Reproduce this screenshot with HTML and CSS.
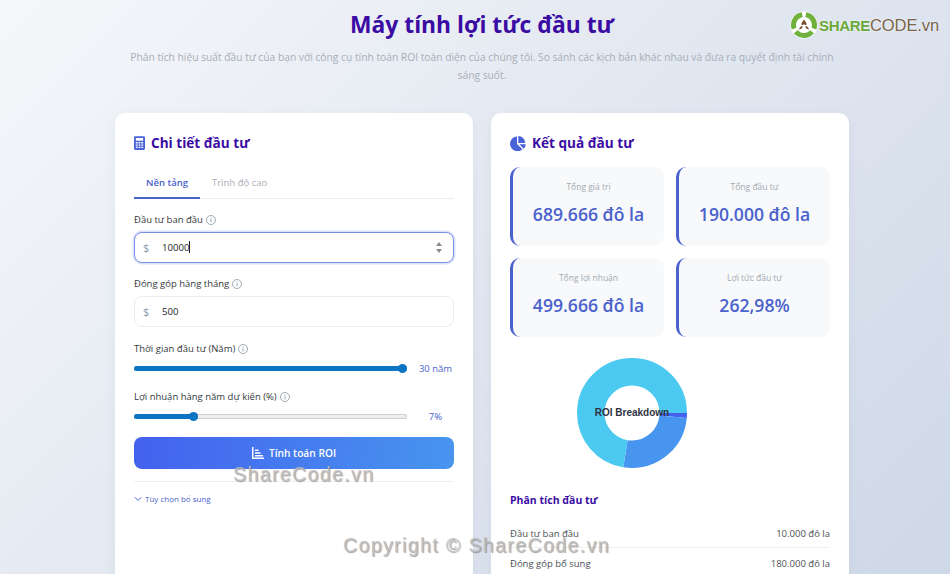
FILE: index.html
```html
<!DOCTYPE html>
<html lang="vi">
<head>
<meta charset="utf-8">
<title>Máy tính lợi tức đầu tư</title>
<link rel="stylesheet" href="styles.css">
</head>
<body>
<div class="logo">
  <svg class="logo-icon" viewBox="0 0 28 28" width="28" height="28">
    <circle cx="14" cy="14" r="13.5" fill="#fff"/>
    <g fill="none" stroke="#70b13c" stroke-width="5">
      <circle cx="14" cy="14" r="10.500" pathLength="100" stroke-dasharray="28 72" transform="rotate(-80 14 14)"/>
      <circle cx="14" cy="14" r="10.500" pathLength="100" stroke-dasharray="28 72" transform="rotate(40 14 14)"/>
      <circle cx="14" cy="14" r="10.500" pathLength="100" stroke-dasharray="28 72" transform="rotate(160 14 14)"/>
    </g>
    <path d="M14 8.500c1.200 2 2.600 3.200 2.800 5-.8.700-2 .6-2.800-.2-.8.800-2 .9-2.800.2.200-1.800 1.600-3 2.800-5zM9 18.500c.3-2 1.800-3.300 3.500-3.500.5 1.500-.8 3.200-3.500 3.500zM19 18.500c-.3-2-1.800-3.300-3.500-3.500-.5 1.500.8 3.200 3.500 3.500z" fill="#7a5230"/>
  </svg>
  <span class="logo-text"><b>SHARE</b>CODE.vn</span>
</div>

<main class="page">
  <header class="head">
    <h1>Máy tính lợi tức đầu tư</h1>
    <p>Phân tích hiệu suất đầu tư của bạn với công cụ tính toán ROI toàn diện của chúng tôi. So sánh các kịch bản khác nhau và đưa ra quyết định tài chính sáng suốt.</p>
  </header>

  <div class="columns">
    <section class="card">
      <h2 class="card-title">
        <svg class="title-icon" viewBox="0 0 12 15" width="11" height="14"><path fill-rule="evenodd" d="M1.500 0h9A1.500 1.500 0 0 1 12 1.500v12a1.500 1.500 0 0 1-1.500 1.500h-9A1.500 1.500 0 0 1 0 13.500v-12A1.500 1.500 0 0 1 1.500 0zM2 2v3h8V2zm0 4.500V8h2V6.500zm3 0V8h2V6.500zm3 0V8h2V6.500zM2 9v1.500h2V9zm3 0v1.500h2V9zm3 0v1.500h2V9zM2 11.500V13h2v-1.500zm3 0V13h2v-1.500zm3 0V13h2v-1.500z" fill="#4a62d8"/></svg>
        Chi tiết đầu tư
      </h2>
      <nav class="tabs">
        <span class="tab active">Nền tảng</span>
        <span class="tab">Trình độ cao</span>
      </nav>

      <label class="field-label">Đầu tư ban đầu <svg class="info" viewBox="0 0 10 10" width="10" height="10"><circle cx="5" cy="5" r="4.500" fill="none" stroke="#8a93a0" stroke-width=".8"/><path d="M5 4.300v3M5 2.500v1" stroke="#8a93a0" stroke-width=".9"/></svg></label>
      <div class="input focused">
        <span class="dollar">$</span><span class="value">10000<i class="caret"></i></span>
        <svg class="spin" viewBox="0 0 6 11" width="6" height="11"><path d="M3 0l3 4H0zM3 11L0 7h6z" fill="#858b93"/></svg>
      </div>

      <label class="field-label">Đóng góp hàng tháng <svg class="info" viewBox="0 0 10 10" width="10" height="10"><circle cx="5" cy="5" r="4.500" fill="none" stroke="#8a93a0" stroke-width=".8"/><path d="M5 4.300v3M5 2.500v1" stroke="#8a93a0" stroke-width=".9"/></svg></label>
      <div class="input">
        <span class="dollar">$</span><span class="value">500</span>
      </div>

      <label class="field-label slider-label">Thời gian đầu tư (Năm) <svg class="info" viewBox="0 0 10 10" width="10" height="10"><circle cx="5" cy="5" r="4.500" fill="none" stroke="#8a93a0" stroke-width=".8"/><path d="M5 4.300v3M5 2.500v1" stroke="#8a93a0" stroke-width=".9"/></svg></label>
      <div class="slider-row">
        <div class="track"><div class="fill" style="width:100%"><i class="thumb"></i></div></div>
        <span class="slider-value">30 năm</span>
      </div>

      <label class="field-label slider-label">Lợi nhuận hàng năm dự kiến (%) <svg class="info" viewBox="0 0 10 10" width="10" height="10"><circle cx="5" cy="5" r="4.500" fill="none" stroke="#8a93a0" stroke-width=".8"/><path d="M5 4.300v3M5 2.500v1" stroke="#8a93a0" stroke-width=".9"/></svg></label>
      <div class="slider-row">
        <div class="track"><div class="fill" style="width:23.6%"><i class="thumb"></i></div></div>
        <span class="slider-value">7%</span>
      </div>

      <button class="primary">
        <svg viewBox="0 0 12 12" width="12" height="12"><path d="M0 0h1.500v10.500H12V12H0zM3 2.500h3.500v1.500H3zM3 5.300h5.500v1.500H3zM3 8.100h8v1.500H3z" fill="#fff"/></svg>
        Tính toán ROI
      </button>
      <div class="more">
        <svg viewBox="0 0 8 6" width="8" height="6"><path d="M.8 1.200L4 4.400l3.200-3.200" fill="none" stroke="#4a62cc" stroke-width="1"/></svg>
        Tùy chọn bổ sung
      </div>
    </section>

    <section class="card">
      <h2 class="card-title results-title">
        <svg class="title-icon" viewBox="0 0 16 15" width="16" height="15"><path d="M7 0.500v7.500l5.500 5.300A7.400 7.400 0 1 1 7 .5zM8.300 0a7.200 7.200 0 0 1 6.900 6.900H8.300zM9.300 8.200h6.500a7.300 7.300 0 0 1-2.100 4.500z" fill="#4a62d8"/></svg>
        Kết quả đầu tư
      </h2>
      <div class="stats">
        <div class="stat"><div class="stat-label">Tổng giá trị</div><div class="stat-value">689.666 đô la</div></div>
        <div class="stat"><div class="stat-label">Tổng đầu tư</div><div class="stat-value">190.000 đô la</div></div>
        <div class="stat"><div class="stat-label">Tổng lợi nhuận</div><div class="stat-value">499.666 đô la</div></div>
        <div class="stat"><div class="stat-label">Lợi tức đầu tư</div><div class="stat-value">262,98%</div></div>
      </div>
      <div class="chart">
        <svg viewBox="0 0 110 110" width="110" height="110">
          <circle class="arc" cx="55" cy="55" r="41.250" pathLength="100" stroke="#4361ee" stroke-dasharray="1.45 98.55"/>
          <circle class="arc" cx="55" cy="55" r="41.250" pathLength="100" stroke="#4895ef" stroke-dasharray="26.1 73.9" stroke-dashoffset="-1.45"/>
          <circle class="arc" cx="55" cy="55" r="41.250" pathLength="100" stroke="#4cc9f0" stroke-dasharray="72.45 27.55" stroke-dashoffset="-27.55"/>
          <text class="chart-title" x="55" y="58" text-anchor="middle">ROI Breakdown</text>
        </svg>
      </div>
      <h3 class="sub-title">Phân tích đầu tư</h3>
      <div class="row"><span>Đầu tư ban đầu</span><span>10.000 đô la</span></div>
      <div class="row"><span>Đóng góp bổ sung</span><span>180.000 đô la</span></div>
    </section>
  </div>
</main>

<div class="mark mark-a">ShareCode.vn</div>
<div class="mark mark-b">Copyright © ShareCode.vn</div>
</body>
</html>
```

FILE: styles.css
```css
* { box-sizing: border-box; }
html, body { margin: 0; height: 574px; overflow: hidden; }
body {
  background: linear-gradient(135deg, #f5f7fa 0%, #c3cfe2 100%) no-repeat;
  background-size: 100% 1000px;
  font-family: "Open Sans", "Noto Sans", sans-serif;
  color: #343a40;
  position: relative;
}
.page { margin-left: 115px; width: 734px; }
.head { text-align: center; padding-top: 8px; }
.head h1 { margin: 0; font-size: 22.800px; line-height: 33px; font-weight: 700; color: #3a0ca3; }
.head p { margin: 8px auto 0; width: 706px; font-size: 10.250px; line-height: 17.500px; color: #a8aeb8; }
.columns { display: grid; grid-template-columns: 358px 358px; gap: 18px; margin-top: 29px; }
.card { background: #fff; border-radius: 10px 10px 0 0; padding: 20px 19px; height: 461px; overflow: hidden; box-shadow: 0 4px 12px rgba(120,135,170,.1); }
.card-title { margin: 0; display: flex; align-items: center; gap: 6px; font-size: 13.600px; line-height: 20px; font-weight: 700; color: #3a0ca3; }
.tabs { display: flex; margin-top: 13px; border-bottom: 1px solid #eceef2; height: 33px; }
.tab { padding: 0 12px; font-size: 9.500px; line-height: 34px; font-weight: 500; color: #a8aeb8; }
.tab.active { color: #4a62cc; font-weight: 600; border-bottom: 2px solid #4a62cc; height: 33px; }
.field-label { display: flex; align-items: center; gap: 3px; font-size: 9.500px; line-height: 14px; font-weight: 500; color: #343a40; }
.tabs + .field-label { margin-top: 14px; }
.slider-label { margin-bottom: -1px; }
.input + .slider-label { margin-top: 15px; }
.input { display: flex; align-items: center; height: 31px; margin-top: 5px; margin-bottom: 14px; padding: 0 11px 0 8px; background: #fff; border: 1px solid #e9ecef; border-radius: 8px; font-size: 9.600px; color: #212529; }
.input.focused { border-color: #7b8fe0; box-shadow: 0 0 0 1.500px rgba(67,97,238,.18); }
.dollar { width: 19px; font-size: 11px; color: #8f98a3; }
.value { flex: 1; }
.caret { display: inline-block; width: 1px; height: 12px; background: #222; vertical-align: -2px; }
.slider-row { display: flex; align-items: center; height: 26px; margin-bottom: 9px; }
.track { width: 273px; height: 5px; background: #efefef; box-shadow: inset 0 0 0 1px #cfcfcf; border-radius: 3px; }
.fill { height: 5px; background: #0b75c4; border-radius: 3px; position: relative; }
.thumb { position: absolute; right: 0; top: -2px; width: 9px; height: 9px; border-radius: 50%; background: #0b75c4; }
.slider-value { flex: 1; text-align: center; padding-left: 10px; font-size: 9.500px; font-weight: 500; color: #4a62cc; }
.primary { display: flex; align-items: center; justify-content: center; gap: 5px; width: 100%; height: 32px; margin-top: -1px; border: 0; border-radius: 8px; background: linear-gradient(100deg, #4361ee, #4895ef); color: #fff; font: 600 10.200px "Open Sans", sans-serif; }
.more { display: flex; align-items: center; gap: 3px; margin-top: 12px; padding-top: 11px; border-top: 1px solid #eef0f3; font-size: 8px; line-height: 12px; font-weight: 500; color: #4a62cc; }
.stats { display: grid; grid-template-columns: 1fr 1fr; gap: 12px; margin-top: 14px; }
.stat { height: 79px; padding-top: 13px; text-align: center; background: #f8f9fb; border-left: 3px solid #4a62cc; border-radius: 10px; }
.stat-label { font-size: 8.500px; line-height: 14px; color: #a2a9b2; }
.stat-value { margin-top: 7px; font-size: 17.600px; line-height: 26px; font-weight: 600; color: #4a62cc; }
.chart { margin: 21px 0 0 67px; height: 110px; }
.arc { fill: none; stroke-width: 27.500; }
.chart-title { font: 700 10px "Liberation Sans", Arial, sans-serif; fill: #2f3342; }
.sub-title { margin: 24px 0 19px; font-size: 10.500px; line-height: 16px; font-weight: 700; color: #3a0ca3; }
.row { display: flex; justify-content: space-between; font-size: 9.500px; line-height: 14px; padding-bottom: 6px; margin-bottom: 9px; border-bottom: 1px solid #eff1f4; color: #4a5056; }
.mark { position: absolute; font-family: "Liberation Sans", Arial, sans-serif; font-weight: 400; letter-spacing: 1.400px; color: rgba(190,190,190,.85); text-shadow: 1px 1px 1px rgba(90,90,90,.55); white-space: nowrap; }
.mark-a { left: 233px; top: 463px; font-size: 19.500px; }
.mark-b { left: 343px; top: 534px; font-size: 19.500px; }
.logo { position: absolute; left: 790px; top: 11px; display: flex; align-items: center; gap: 1px; }
.logo-icon { display: block; }
.logo-text { font: 400 16.500px "Liberation Sans", Arial, sans-serif; color: #7a6448; letter-spacing: -.1px; text-shadow: 0 0 2px #fff; }
.logo-text b { color: #69a83a; font-weight: 700; font-size: 15px; letter-spacing: -.3px; }
```
